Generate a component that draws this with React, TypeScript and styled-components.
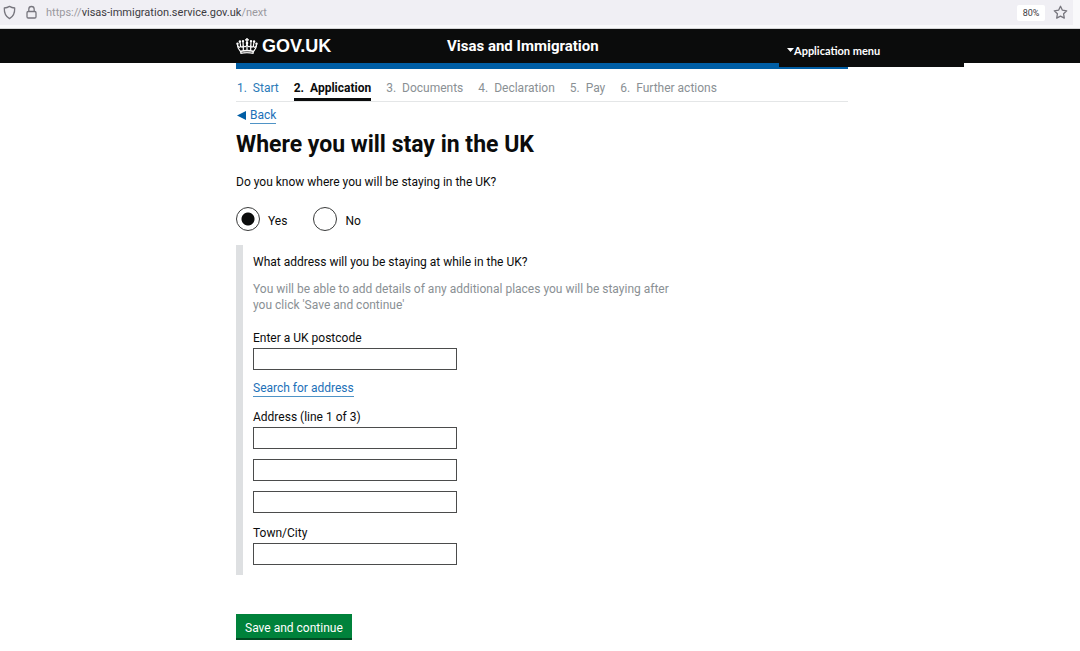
import React, { useState } from "react";
import styled, { createGlobalStyle } from "styled-components";

const GlobalStyle = createGlobalStyle`
  * { box-sizing: border-box; }
  body {
    margin: 0;
    background: #ffffff;
    color: #0b0c0c;
    font-family: Roboto, "Liberation Sans", sans-serif;
    font-size: 12px;
    line-height: 16px;
  }
`;

const BrowserBar = styled.div`
  background: #f9f9fb;
  padding: 0 7px 3px 0;
  border-bottom: 1px solid #d4d4d6;
`;

const AddressBar = styled.div`
  display: flex;
  align-items: center;
  height: 25px;
  padding: 0 5px 0 2px;
  background: #f0eff4;
`;

const BarIcon = styled.svg`
  width: 15px;
  height: 15px;
  margin-right: 7px;
  fill: none;
  stroke: #77767e;
  stroke-width: 1.3;
  stroke-linejoin: round;
`;

const Url = styled.span`
  flex: 1;
  padding-top: 1px;
  font-size: 11px;
  color: #9a999f;
`;

const Host = styled.span`
  color: #3c3b42;
`;

const ZoomLevel = styled.button`
  height: 16px;
  width: 28px;
  margin-right: 8px;
  padding: 0;
  border: 0;
  border-radius: 2px;
  background: #ffffff;
  color: #3c3b42;
  font-family: Roboto, sans-serif;
  font-size: 9px;
`;

const StarButton = styled.button`
  display: flex;
  padding: 0;
  border: 0;
  background: none;

  ${BarIcon} {
    margin: 0;
  }
`;

const Header = styled.header`
  background: #0b0c0c;
  padding: 0 116px 0 236px;
`;

const HeaderInner = styled.div`
  display: flex;
  max-width: 728px;
  height: 34px;
`;

const Logo = styled.a`
  display: flex;
  align-items: center;
  gap: 4px;
  flex: 0 0 211px;
  color: #ffffff;
  font-family: "Liberation Sans", sans-serif;
  font-size: 18px;
  font-weight: 700;
  text-decoration: none;
`;

const ServiceName = styled.a`
  flex: 1;
  align-self: center;
  color: #ffffff;
  font-size: 15px;
  font-weight: 700;
  text-decoration: none;
`;

const MenuButton = styled.button`
  position: relative;
  display: flex;
  align-items: center;
  width: 185px;
  height: 38px;
  padding: 4px 8px 0;
  border: 0;
  background: #0b0c0c;
  color: #ffffff;
  font-family: Lato, sans-serif;
  font-size: 11px;
  font-weight: 700;
`;

const Page = styled.div`
  padding: 0 116px 0 236px;
`;

const Column = styled.div`
  max-width: 612px;
`;

const BlueBar = styled.div`
  height: 6px;
  background: #005ea5;
`;

const Steps = styled.ol`
  display: flex;
  gap: 15px;
  margin: 0;
  padding: 11px 0 0 1px;
  border-bottom: 1px solid #e4e6e7;
  list-style: none;
`;

const Step = styled.li<{ $current?: boolean }>`
  height: 21px;
  color: ${(p) => (p.$current ? "#0b0c0c" : "#8a9094")};
  font-weight: ${(p) => (p.$current ? 700 : 400)};
  border-bottom: ${(p) => (p.$current ? "3px solid #0b0c0c" : "0")};
  white-space: pre;
`;

const StepLink = styled.a`
  color: #2b7ab8;
  text-decoration: none;
`;

const TextLink = styled.a`
  display: inline-block;
  border-bottom: 1px solid #4f93c6;
  color: #1d70b8;
  line-height: 16px;
  text-decoration: none;
`;

const BackRow = styled.div`
  display: flex;
  align-items: center;
  gap: 4px;
  margin-top: 5px;
  padding-left: 1px;
`;

const Title = styled.h1`
  margin: 6px 0 14px;
  font-size: 23px;
  font-weight: 700;
  line-height: 30px;
`;

const Fieldset = styled.fieldset`
  margin: 0;
  padding: 0;
  border: 0;
`;

const Legend = styled.legend`
  padding: 0;
`;

const Radios = styled.div`
  display: flex;
  gap: 26px;
  margin: 17px 0 14px;
`;

const RadioLabel = styled.label`
  display: flex;
  align-items: center;
  gap: 8px;
`;

const Radio = styled.input`
  appearance: none;
  width: 24px;
  height: 24px;
  margin: 0;
  border: 1px solid #3a3b3b;
  border-radius: 50%;

  &:checked {
    background: radial-gradient(circle, #0b0c0c 6px, transparent 7px);
  }
`;

const RadioText = styled.span`
  padding-top: 3px;
`;

const AddressPanel = styled(Fieldset)`
  padding: 9px 0 10px 10px;
  border-left: 7px solid #dee0e2;
`;

const PanelLegend = styled(Legend)`
  float: left;
  width: 100%;
`;

const Hint = styled.p`
  clear: both;
  max-width: 424px;
  margin: 0;
  padding: 11px 0 17px;
  color: #8a9094;
`;

const Field = styled.div`
  display: flex;
  flex-direction: column;
  align-items: flex-start;
  gap: 10px;
  margin-bottom: 12px;

  &:last-child {
    margin-bottom: 0;
  }
`;

const LabelledInput = styled.label`
  display: flex;
  flex-direction: column;
  gap: 2px;
  width: 100%;
`;

const TextInput = styled.input`
  width: 204px;
  max-width: 100%;
  height: 22px;
  padding: 2px 4px;
  border: 1px solid #4b4c4c;
  background: #ffffff;
  font: inherit;
`;

const SaveButton = styled.button`
  height: 26px;
  margin: 39px 0 11px;
  padding: 3px 9px 0;
  border: 0;
  border-bottom: 2px solid #004a22;
  background: #00823b;
  color: #ffffff;
  font: inherit;
`;

function Crown() {
  return (
    <svg width="22" height="17" viewBox="0 0 22 17" fill="#ffffff" aria-hidden="true">
      <path d="M10.300 0h1.400v1.200h1.300v1.300h-1.300v1.500h-1.400V2.500H9V1.200h1.300z" />
      <circle cx="11" cy="5" r="1.300" />
      <circle cx="7" cy="3.100" r="1.200" />
      <circle cx="3.900" cy="3.500" r="1.200" />
      <circle cx="1.500" cy="5.800" r="1.200" />
      <circle cx="15" cy="3.100" r="1.200" />
      <circle cx="18.100" cy="3.500" r="1.200" />
      <circle cx="20.500" cy="5.800" r="1.200" />
      <g fill="none" stroke="#ffffff" strokeWidth="1.200" strokeLinejoin="round">
        <path d="M4.200 13.200C2.600 11.300 1.400 9.300 1.500 6.800M17.800 13.200c1.600-1.900 2.800-3.900 2.700-6.400" />
        <path d="M1.500 7.500c1.300 2.600 3.200 2.300 3-0.500L3.900 4M20.500 7.500c-1.300 2.600-3.200 2.300-3-0.500l0.600-3" />
        <path d="M4.600 8c1 1.700 2.500 1.300 2.600-0.600L7 4M17.400 8c-1 1.700-2.500 1.300-2.600-0.600L15 4" />
        <path d="M7.200 7.600c0.800 1.800 3.600 1.600 3.800-1.600 0.200 3.200 3 3.400 3.800 1.600" />
        <path d="M7.300 8.500v4M14.700 8.500v4M11 6v6" />
      </g>
      <path d="M3.800 12.800c4.600-1.300 9.800-1.300 14.400 0l-0.700 3.200c-4.200-0.900-8.800-0.900-13 0z" />
      <path d="M5.600 14.300c3.600-0.800 7.200-0.800 10.800 0" fill="none" stroke="#0b0c0c" strokeWidth="0.700" />
    </svg>
  );
}

const upcomingSteps = ["3.  Documents", "4.  Declaration", "5.  Pay", "6.  Further actions"];

export default function App() {
  const [known, setKnown] = useState("yes");

  return (
    <>
      <GlobalStyle />
      <BrowserBar>
        <AddressBar>
          <BarIcon viewBox="0 0 15 15" aria-hidden="true">
            <path d="M7.500 1.400c1.600 1 3.300 1.500 5.200 1.600 0.200 5-1.200 8.500-5.200 10.600C3.500 11.500 2.100 8 2.300 3c1.900-0.100 3.600-0.600 5.200-1.600z" />
          </BarIcon>
          <BarIcon viewBox="0 0 15 15" aria-hidden="true">
            <rect x="3" y="6.500" width="9" height="6.500" rx="1.200" />
            <path d="M4.800 6.500V4.200a2.700 2.700 0 0 1 5.400 0v2.300" />
          </BarIcon>
          <Url>
            https://<Host>visas-immigration.service.gov.uk</Host>/next
          </Url>
          <ZoomLevel type="button">80%</ZoomLevel>
          <StarButton type="button" aria-label="Bookmark this page">
            <BarIcon viewBox="0 0 15 15" aria-hidden="true">
              <path d="M7.500 1.300l1.900 3.900 4.300 0.600-3.100 3 0.700 4.300-3.800-2-3.800 2 0.700-4.300-3.100-3 4.300-0.600z" />
            </BarIcon>
          </StarButton>
        </AddressBar>
      </BrowserBar>

      <Header>
        <HeaderInner>
          <Logo href="#">
            <Crown />
            GOV.UK
          </Logo>
          <ServiceName href="#">Visas and Immigration</ServiceName>
          <MenuButton type="button">
            <svg width="7" height="4" viewBox="0 0 7 4" fill="#ffffff" aria-hidden="true">
              <path d="M0 0h7L3.500 4z" />
            </svg>
            Application menu
          </MenuButton>
        </HeaderInner>
      </Header>

      <Page>
        <Column>
          <BlueBar />
          <nav aria-label="Progress">
            <Steps>
              <Step>
                <StepLink href="#">{"1.  Start"}</StepLink>
              </Step>
              <Step $current aria-current="step">
                {"2.  Application"}
              </Step>
              {upcomingSteps.map((step) => (
                <Step key={step}>{step}</Step>
              ))}
            </Steps>
          </nav>
          <BackRow>
            <svg width="9" height="10" viewBox="0 0 9 10" fill="#005ea5" aria-hidden="true">
              <path d="M9 0v9L0 4.500z" />
            </svg>
            <TextLink href="#">Back</TextLink>
          </BackRow>

          <main>
            <Title>Where you will stay in the UK</Title>
            <form onSubmit={(e) => e.preventDefault()}>
              <Fieldset>
                <Legend>Do you know where you will be staying in the UK?</Legend>
                <Radios>
                  <RadioLabel>
                    <Radio type="radio" name="known" checked={known === "yes"} onChange={() => setKnown("yes")} />
                    <RadioText>Yes</RadioText>
                  </RadioLabel>
                  <RadioLabel>
                    <Radio type="radio" name="known" checked={known === "no"} onChange={() => setKnown("no")} />
                    <RadioText>No</RadioText>
                  </RadioLabel>
                </Radios>
              </Fieldset>

              <AddressPanel>
                <PanelLegend>What address will you be staying at while in the UK?</PanelLegend>
                <Hint>
                  You will be able to add details of any additional places you will be staying after you click 'Save
                  and continue'
                </Hint>
                <Field>
                  <LabelledInput>
                    Enter a UK postcode
                    <TextInput type="text" />
                  </LabelledInput>
                  <TextLink href="#">Search for address</TextLink>
                </Field>
                <Field>
                  <LabelledInput>
                    Address (line 1 of 3)
                    <TextInput type="text" />
                  </LabelledInput>
                  <TextInput type="text" aria-label="Address line 2" />
                  <TextInput type="text" aria-label="Address line 3" />
                </Field>
                <Field>
                  <LabelledInput>
                    Town/City
                    <TextInput type="text" />
                  </LabelledInput>
                </Field>
              </AddressPanel>

              <SaveButton type="submit">Save and continue</SaveButton>
            </form>
          </main>
        </Column>
      </Page>
    </>
  );
}
